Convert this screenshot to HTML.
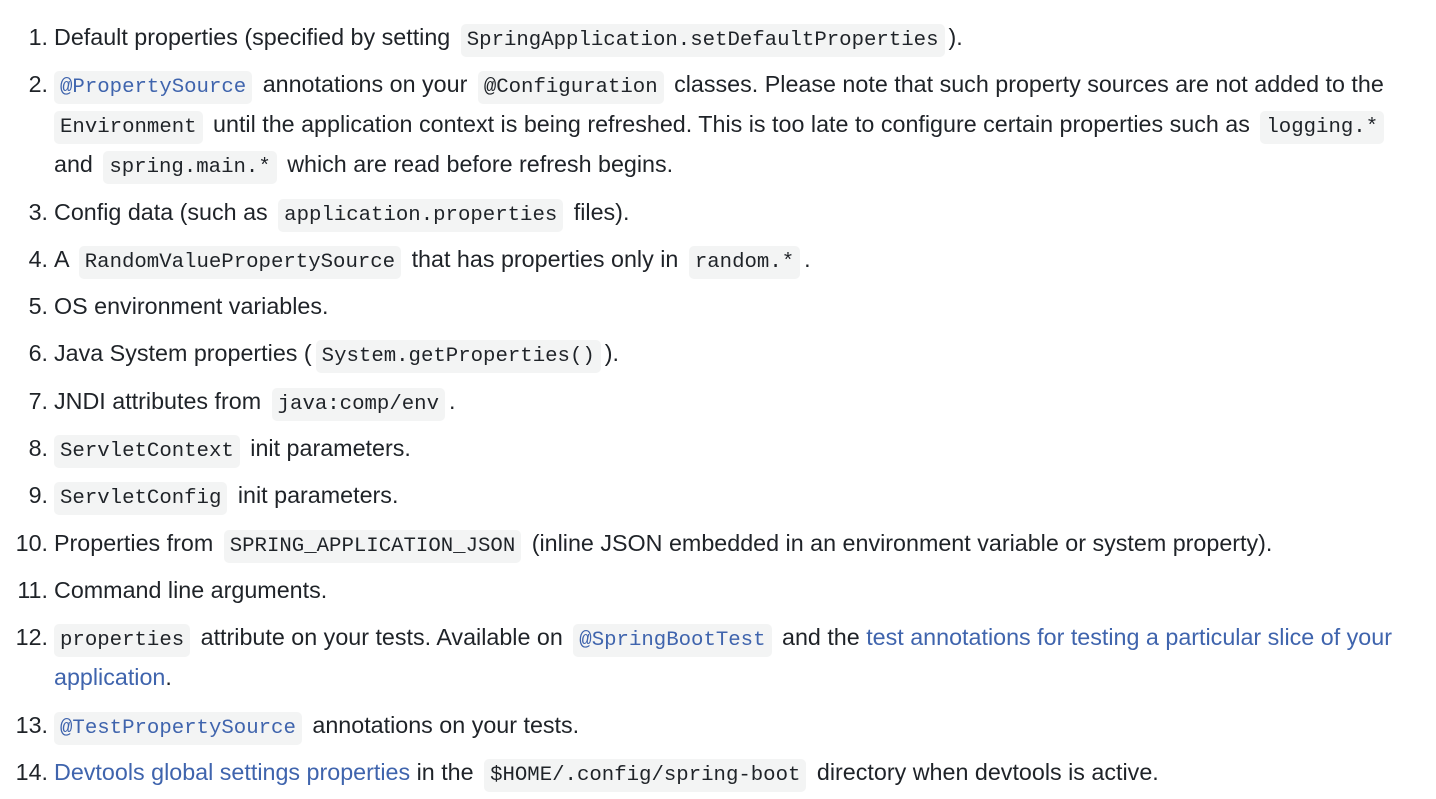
<!DOCTYPE html>
<html><head><meta charset="utf-8"><style>
body{margin:0;background:#fff;width:1436px;height:799px;overflow:hidden;font-family:"Liberation Sans",sans-serif;font-size:23.3px;color:#1f2328;}
ol{margin:0;padding:17px 0 0 54px;list-style:none;}
li{position:relative;line-height:40px;height:auto;margin-bottom:7.3px;white-space:nowrap;}
li .n{position:absolute;right:100%;margin-right:6px;}
code{font-family:"Liberation Mono",monospace;font-size:20.7px;line-height:20px;background:#f3f4f4;border-radius:5px;padding:5px 6px;margin:0 4px;}
a{color:#3f64ad;text-decoration:none;}
a code{color:#3f64ad;}
</style></head><body>
<ol>
<li><span class="n">1.</span>Default properties (specified by setting <code>SpringApplication.setDefaultProperties</code>).</li>
<li><span class="n">2.</span><a><code style="margin-left:0">@PropertySource</code></a> annotations on your <code>@Configuration</code> classes. Please note that such property sources are not added to the<br><code style="margin-left:0">Environment</code> until the application context is being refreshed. This is too late to configure certain properties such as <code>logging.*</code><br>and <code>spring.main.*</code> which are read before refresh begins.</li>
<li><span class="n">3.</span>Config data (such as <code>application.properties</code> files).</li>
<li><span class="n">4.</span>A <code>RandomValuePropertySource</code> that has properties only in <code>random.*</code>.</li>
<li><span class="n">5.</span>OS environment variables.</li>
<li><span class="n">6.</span>Java System properties (<code>System.getProperties()</code>).</li>
<li><span class="n">7.</span>JNDI attributes from <code>java:comp/env</code>.</li>
<li><span class="n">8.</span><code style="margin-left:0">ServletContext</code> init parameters.</li>
<li><span class="n">9.</span><code style="margin-left:0">ServletConfig</code> init parameters.</li>
<li><span class="n">10.</span>Properties from <code>SPRING_APPLICATION_JSON</code> (inline JSON embedded in an environment variable or system property).</li>
<li><span class="n">11.</span>Command line arguments.</li>
<li><span class="n">12.</span><code style="margin-left:0">properties</code> attribute on your tests. Available on <a><code>@SpringBootTest</code></a> and the <a>test annotations for testing a particular slice of your</a><br><a>application</a>.</li>
<li><span class="n">13.</span><a><code style="margin-left:0">@TestPropertySource</code></a> annotations on your tests.</li>
<li><span class="n">14.</span><a>Devtools global settings properties</a> in the <code>$HOME/.config/spring-boot</code> directory when devtools is active.</li>
</ol>
</body></html>
